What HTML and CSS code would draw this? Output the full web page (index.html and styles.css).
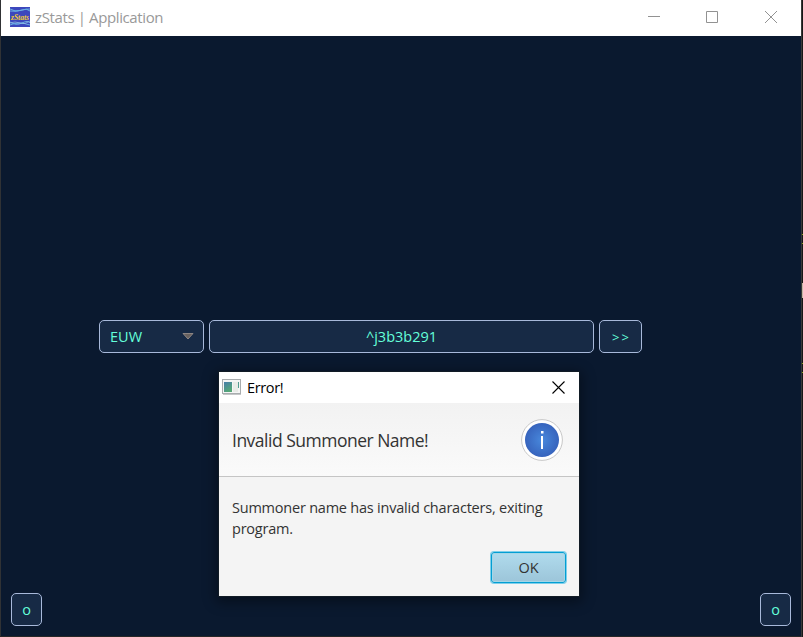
FILE: index.html
```html
<!DOCTYPE html>
<html lang="en">
<head>
<meta charset="utf-8">
<title>zStats | Application</title>
<link rel="stylesheet" href="styles.css">
</head>
<body>
<div class="window">
  <header class="titlebar">
    <svg class="app-icon" width="20" height="20" viewBox="0 0 20 20">
      <rect width="20" height="20" fill="#3c47bd"/>
      <path d="M0 2Q5 5 10 3.500T20 2M0 4Q7 5 12 3T20 4M0 15Q6 19 12 16T20 16M0 18Q8 14 20 18" fill="none" stroke="#6bb0e4" stroke-width="1"/>
      <path d="M0 16Q5 14 10 16T20 14" fill="none" stroke="#a5cdea" stroke-width=".6"/>
      <text class="icon-text" x="1" y="12.500" textLength="18" lengthAdjust="spacingAndGlyphs">zStats</text>
    </svg>
    <span class="title">zStats | Application</span>
    <svg class="controls" width="131" height="14" viewBox="0 0 131 14" fill="none" stroke="#929292">
      <path d="M0 6.500H12M58.500 1.500h11v11h-11zM117 1l12 12M129 1l-12 12"/>
    </svg>
  </header>
  <main class="content">
    <form class="search">
      <div class="field region"><span>EUW</span>
        <svg width="12" height="7" viewBox="0 0 12 7"><path d="M1 .5h10L6 6z" fill="#68615f" stroke="#a09690" stroke-width=".8"/></svg>
      </div>
      <div class="field name"><span>^j3b3b291</span></div>
      <div class="field go"><span>&gt;&gt;</span></div>
    </form>
    <footer class="corners">
      <div class="field corner">o</div>
      <div class="field corner">o</div>
    </footer>
  </main>
</div>
<div class="backdrop"><i class="green"></i><i class="green"></i><i class="glyph"></i><i class="green"></i><i class="green"></i></div>
<section class="dialog">
  <header class="dialog-title">
    <svg width="19" height="16" viewBox="0 0 19 16">
      <defs><linearGradient id="pane" x2=".5" y2="1"><stop stop-color="#477daa"/><stop offset="1" stop-color="#55a876"/></linearGradient></defs>
      <rect x=".5" y=".5" width="18" height="14" fill="#f5f5f5" stroke="#a8acae"/>
      <path d="M1 15.500h18" stroke="#c5c7c9"/>
      <rect x="2" y="3" width="8" height="10" fill="url(#pane)"/>
      <rect x="11" y="3" width="5" height="10" fill="#e8ebe7"/>
      <path d="M16.500 3v6" stroke="#559c91"/>
    </svg>
    <span class="error-label">Error!</span>
    <svg class="close" width="13" height="13" viewBox="0 0 13 13"><path d="M.5 .5l12 12M12.500 .5l-12 12" stroke="#000" stroke-width="1.100"/></svg>
  </header>
  <div class="dialog-head">
    <span class="headline">Invalid Summoner Name!</span>
    <svg width="42" height="42" viewBox="0 0 42 42">
      <defs><radialGradient id="info"><stop stop-color="#4888dc"/><stop offset="1" stop-color="#3764bd"/></radialGradient></defs>
      <circle cx="21" cy="21" r="20.400" fill="#fff" stroke="#c8c8c8"/>
      <circle cx="21" cy="21" r="17" fill="url(#info)"/>
      <path d="M20 12h2.500v2.500H20zM20 17h2v13h-2z" fill="#fff"/>
    </svg>
  </div>
  <div class="dialog-body">
    <p>Summoner name has invalid characters, exiting<br>program.</p>
    <button class="ok" type="button">OK</button>
  </div>
</section>
</body>
</html>
```
FILE: styles.css
```css
* { box-sizing: border-box; }
body {
  margin: 0;
  width: 803px;
  height: 637px;
  overflow: hidden;
  display: flex;
  background: #272727;
  font: 15px "Open Sans", "Noto Sans", sans-serif;
}
svg { display: block; flex: none; }
.window {
  width: 801px;
  height: 636px;
  border-left: 1px solid #303235;
  display: flex;
  flex-direction: column;
}
.titlebar {
  height: 36px;
  flex: none;
  display: flex;
  align-items: center;
  padding: 0 22px 2px 9px;
  background: #fff;
  color: #999;
}
.icon-text { font: italic bold 8px "Liberation Serif", serif; fill: #f5ca38; }
.title { margin-left: 5px; letter-spacing: -.38px; }
.controls { margin-left: auto; }
.content {
  flex: 1;
  background: #0a192f;
  display: flex;
  flex-direction: column;
  justify-content: space-between;
  padding: 284px 10px 10px;
}
.search { display: flex; gap: 5px; margin-left: 88px; }
.field {
  height: 33px;
  border: 1px solid #a8b9da;
  border-radius: 5px;
  background: #172a45;
  color: #64ffda;
  display: flex;
  align-items: center;
  justify-content: center;
  font-size: 14.5px;
}
.region { width: 105px; justify-content: space-between; padding: 0 9px 0 10px; }
.name { width: 385px; }
.go { width: 43px; letter-spacing: 2px; padding-left: 2px; font-size: 13px; }
.corners { display: flex; justify-content: space-between; }
.corner { width: 31px; }
.backdrop { width: 2px; padding-top: 234px; border-left: 1px solid #393938; background: #171717; }
.backdrop i { display: block; width: 1px; height: 1px; }
.green { background: #88a514; margin-bottom: 8px; }
.glyph { background: #c2b6a4; margin: 39px 0 65px; }
.backdrop .glyph { height: 15px; }
.dialog {
  position: absolute;
  left: 219px;
  top: 372px;
  width: 360px;
  height: 224px;
  display: flex;
  flex-direction: column;
  background: #f4f4f4;
  color: #333;
  box-shadow: 0 0 0 1px #111b25, 0 3px 12px 3px rgba(0,0,0,.4);
}
.dialog-title {
  height: 31px;
  display: flex;
  align-items: center;
  padding: 0 14px 1px 3px;
  background: #fff;
  color: #000;
  font-size: 14.5px;
  letter-spacing: -.35px;
}
.error-label { margin-left: 6px; }
.close { margin-left: auto; }
.dialog-head {
  height: 74px;
  display: flex;
  align-items: center;
  justify-content: space-between;
  padding: 0 16px 0 13px;
  background: linear-gradient(#f2f2f2, #fafafa);
  border-bottom: 1px solid #c5c5c5;
}
.headline { padding-top: 1px; font-size: 17.5px; letter-spacing: -.5px; }
.dialog-body {
  flex: 1;
  display: flex;
  flex-direction: column;
  justify-content: space-between;
  padding: 20px 13px 13px;
}
.dialog-body p { margin: 0; line-height: 21px; font-size: 14.5px; letter-spacing: -.22px; white-space: nowrap; }
.ok {
  align-self: flex-end;
  width: 75px;
  height: 31px;
  border: 1px solid #039ed3;
  border-radius: 3px;
  background: linear-gradient(#b0dbed, #9cc5d9);
  box-shadow: 0 0 0 1px #7fcfea, inset 0 0 0 1px #a3d6e7;
  color: #333;
  padding: 0;
  font: 14.5px "Open Sans", "Noto Sans", sans-serif;
}
```
